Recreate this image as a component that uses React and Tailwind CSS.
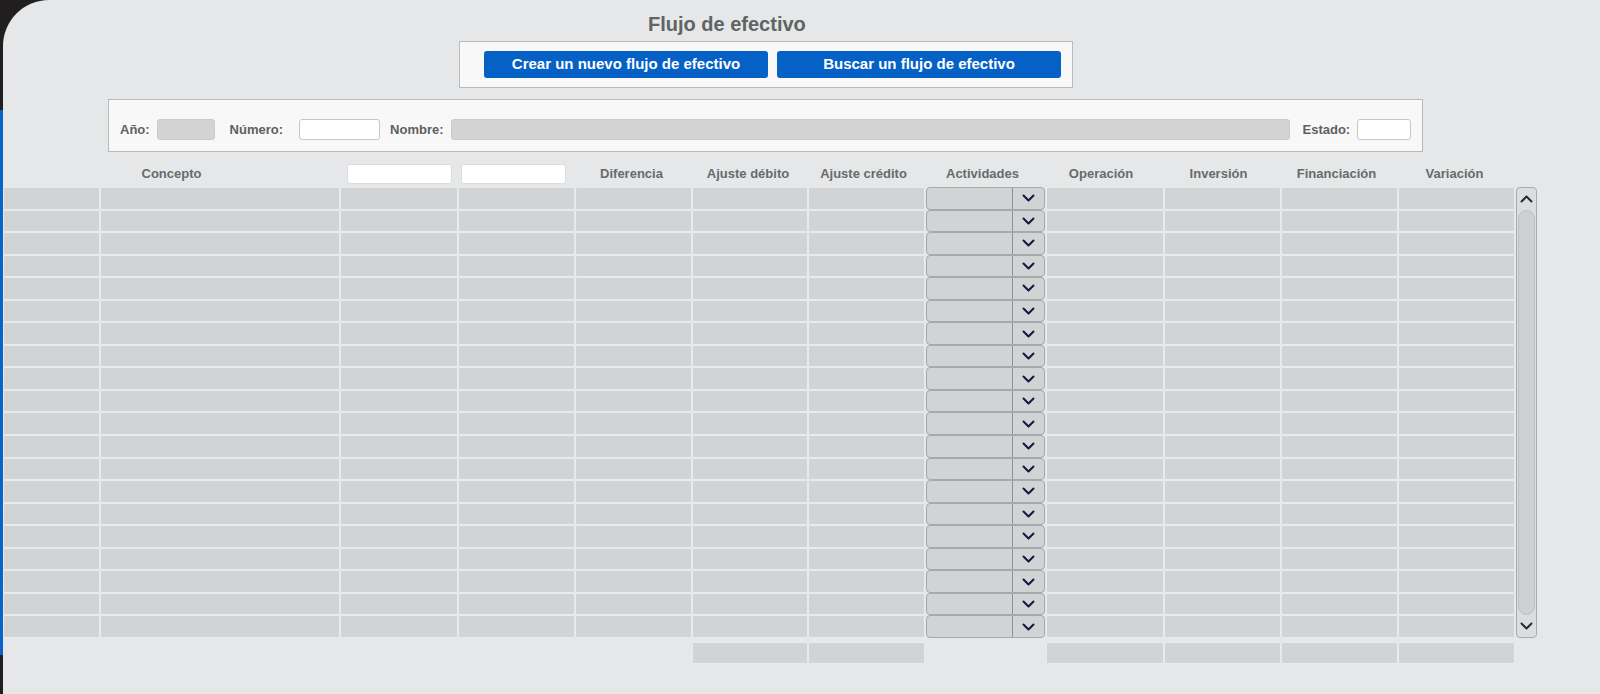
import React from "react";

const COLS = "grid-cols-[97px_240px_118px_117px_117px_116px_117px_121px_118px_117px_117px_117px]";
const ROWS = Array.from({ length: 20 });

function Chevron({ up = false, color = "#16163f" }) {
  return (
    <svg width="13" height="8" viewBox="0 0 13 8" className="block">
      <polyline
        points={up ? "1.5,6.5 6.5,1.5 11.5,6.5" : "1.5,1.5 6.5,6.5 11.5,1.5"}
        fill="none"
        stroke={color}
        strokeWidth="2"
        strokeLinecap="round"
        strokeLinejoin="round"
      />
    </svg>
  );
}

function Cell() {
  return <div className="h-full bg-[#d2d3d5] border border-[#e9eaeb] rounded-[2px]" />;
}

function Dropdown() {
  return (
    <div className="h-full pl-[1px] pr-[1px]">
      <div className="h-full flex bg-[#d2d3d5] border border-[#a7a8aa] rounded-[4px]">
        <div className="flex-1 border-r border-[#8e8f91]" />
        <div className="w-[31px] flex items-center justify-center">
          <Chevron />
        </div>
      </div>
    </div>
  );
}

export default function App() {
  return (
    <div
      className="w-[1600px] h-[694px] flex bg-[#211e1f] overflow-hidden"
      style={{ fontFamily: '"Liberation Sans", Arial, sans-serif' }}
    >
      <div className="w-[3px] h-full flex flex-col">
        <div className="h-[110px]" />
        <div className="h-[545px] bg-[#0a63c9]" />
      </div>
      <div className="flex-1 h-full bg-[#e6e7e9] rounded-tl-[46px] flex flex-col">
        {/* Title */}
        <div className="pt-[13px] pl-[645px] h-[41px]">
          <h1 className="text-[20px] leading-[23px] font-bold text-[#606462]">Flujo de efectivo</h1>
        </div>
        {/* Buttons panel */}
        <div className="ml-[456px] w-[614px] h-[47px] bg-[#f8f8f8] border border-[#b9babb] flex items-center pl-[24px] gap-[9px]">
          <button className="w-[284px] h-[27px] bg-[#0561c6] rounded-[3px] text-white font-bold text-[15px]">
            Crear un nuevo flujo de efectivo
          </button>
          <button className="w-[284px] h-[27px] bg-[#0561c6] rounded-[3px] text-white font-bold text-[15px]">
            Buscar un flujo de efectivo
          </button>
        </div>
        {/* Filter panel */}
        <div className="mt-[11px] ml-[105px] w-[1315px] h-[53px] bg-[#f8f8f8] border border-[#b9babb] flex items-center pt-[8px] pl-[11px] text-[13px] font-bold text-[#5d6160]">
          <span>Año:</span>
          <div className="ml-[7px] w-[58px] h-[21px] bg-[#d2d3d5] border border-[#c9cacc] rounded-[3px]" />
          <span className="ml-[15px]">Número:</span>
          <div className="ml-[16px] w-[81px] h-[21px] bg-white border border-[#c6c7c9] rounded-[3px]" />
          <span className="ml-[10px]">Nombre:</span>
          <div className="ml-[7px] w-[839px] h-[21px] bg-[#d2d3d5] border border-[#c9cacc] rounded-[3px]" />
          <span className="ml-[13px]">Estado:</span>
          <div className="ml-[7px] w-[54px] h-[21px] bg-white border border-[#c6c7c9] rounded-[3px]" />
        </div>
        {/* Table header */}
        <div className={`mt-[8px] h-[27px] grid ${COLS} items-center text-[13px] font-bold text-[#676b6a]`}>
          <div className="col-span-2 text-center pt-[1px]">Concepto</div>
          <div className="pl-[7px]">
            <div className="w-[105px] h-[20px] bg-white border border-[#dcdcdc] rounded-[3px]" />
          </div>
          <div className="pl-[3px]">
            <div className="w-[105px] h-[20px] bg-white border border-[#dcdcdc] rounded-[3px]" />
          </div>
          <div className="text-center pr-[4px]">Diferencia</div>
          <div className="text-center pr-[4px]">Ajuste débito</div>
          <div className="text-center pr-[6px]">Ajuste crédito</div>
          <div className="text-center pr-[6px]">Actividades</div>
          <div className="text-center pr-[8px]">Operación</div>
          <div className="text-center pr-[8px]">Inversión</div>
          <div className="text-center pr-[6px]">Financiación</div>
          <div className="text-center pr-[4px]">Variación</div>
        </div>
        {/* Table body + scrollbar */}
        <div className="flex h-[451px]">
          <div className="flex flex-col">
            {ROWS.map((_, i) => (
              <div key={i} className={`h-[22.55px] grid ${COLS}`}>
                <Cell />
                <Cell />
                <Cell />
                <Cell />
                <Cell />
                <Cell />
                <Cell />
                <Dropdown />
                <Cell />
                <Cell />
                <Cell />
                <Cell />
              </div>
            ))}
          </div>
          <div className="ml-[1px] w-[21px] h-[451px] bg-[#dcdddf] border border-[#a9aaac] rounded-[4px] flex flex-col items-center">
            <div className="h-[22px] flex items-center justify-center">
              <Chevron up color="#2a2a2a" />
            </div>
            <div className="w-[17px] flex-1 bg-[#cfd0d2] border border-[#bfc0c2] rounded-full" />
            <div className="h-[22px] flex items-center justify-center">
              <Chevron color="#2a2a2a" />
            </div>
          </div>
        </div>
        {/* Footer totals */}
        <div className={`mt-[4px] h-[22px] grid ${COLS}`}>
          <div />
          <div />
          <div />
          <div />
          <div />
          <Cell />
          <Cell />
          <div />
          <Cell />
          <Cell />
          <Cell />
          <Cell />
        </div>
      </div>
    </div>
  );
}
